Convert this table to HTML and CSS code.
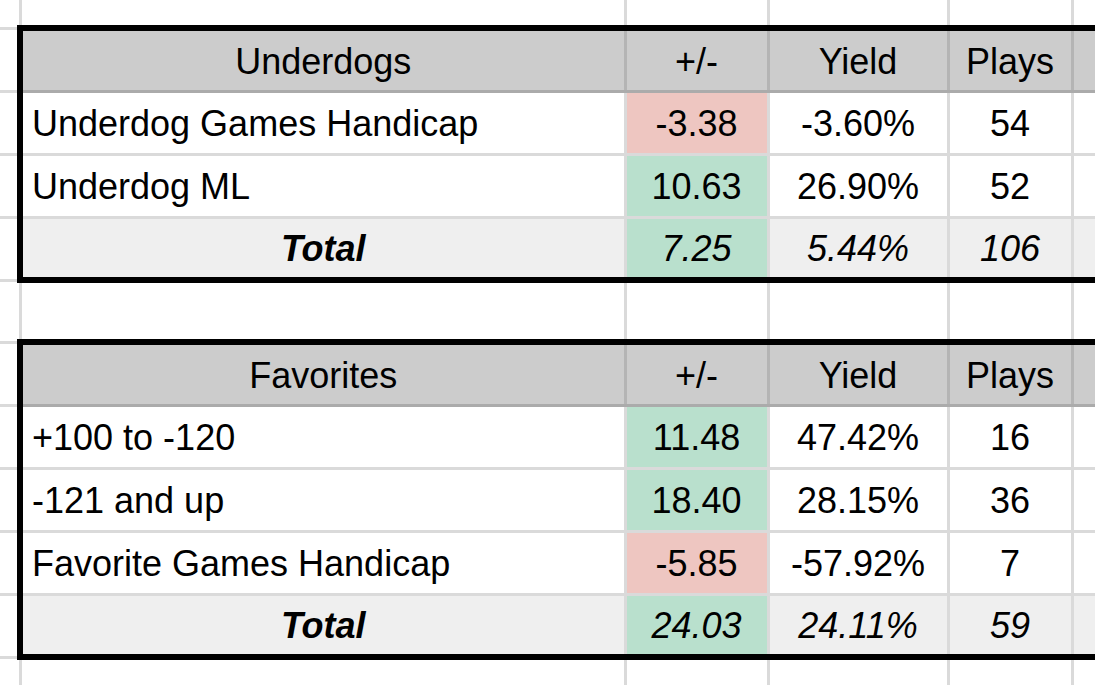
FILE: index.html
```html
<!DOCTYPE html>
<html>
<head>
<meta charset="utf-8">
<link rel="stylesheet" href="styles.css">
</head>
<body>
<table class="sheet">
  <colgroup>
    <col class="col-a"><col class="col-b"><col class="col-c"><col class="col-d"><col class="col-e"><col class="col-f">
  </colgroup>
  <tr class="r-top">
    <td class="ca"></td><td></td><td></td><td></td><td></td><td></td>
  </tr>
  <tr class="r-head">
    <td class="ca"></td><td class="th first">Underdogs</td><td class="th">+/-</td><td class="th">Yield</td><td class="th">Plays</td><td class="th"></td>
  </tr>
  <tr class="r-body">
    <td class="ca"></td><td class="label first">Underdog Games Handicap</td><td class="num neg">-3.38</td><td class="num">-3.60%</td><td class="num">54</td><td></td>
  </tr>
  <tr class="r-body">
    <td class="ca"></td><td class="label first">Underdog ML</td><td class="num pos">10.63</td><td class="num">26.90%</td><td class="num">52</td><td></td>
  </tr>
  <tr class="r-total">
    <td class="ca"></td><td class="tot first"><b>Total</b></td><td class="tot pos">7.25</td><td class="tot">5.44%</td><td class="tot">106</td><td class="tot"></td>
  </tr>
  <tr class="r-gap">
    <td class="ca"></td><td></td><td></td><td></td><td></td><td></td>
  </tr>
  <tr class="r-head">
    <td class="ca"></td><td class="th first">Favorites</td><td class="th">+/-</td><td class="th">Yield</td><td class="th">Plays</td><td class="th"></td>
  </tr>
  <tr class="r-body">
    <td class="ca"></td><td class="label first">+100 to -120</td><td class="num pos">11.48</td><td class="num">47.42%</td><td class="num">16</td><td></td>
  </tr>
  <tr class="r-body">
    <td class="ca"></td><td class="label first">-121 and up</td><td class="num pos">18.40</td><td class="num">28.15%</td><td class="num">36</td><td></td>
  </tr>
  <tr class="r-body">
    <td class="ca"></td><td class="label first">Favorite Games Handicap</td><td class="num neg">-5.85</td><td class="num">-57.92%</td><td class="num">7</td><td></td>
  </tr>
  <tr class="r-total">
    <td class="ca"></td><td class="tot first"><b>Total</b></td><td class="tot pos">24.03</td><td class="tot">24.11%</td><td class="tot">59</td><td class="tot"></td>
  </tr>
  <tr class="r-gap">
    <td class="ca"></td><td></td><td></td><td></td><td></td><td></td>
  </tr>
</table>
</body>
</html>
```

FILE: styles.css
```css
html, body {
  margin: 0;
  padding: 0;
  background: #ffffff;
  overflow: hidden;
}

.sheet {
  border-collapse: collapse;
  table-layout: fixed;
  width: 1192px;
  font-family: "Liberation Sans", Arial, sans-serif;
  font-size: 36px;
  color: #000;
}

.col-a { width: 20px; }
.col-b { width: 605px; }
.col-c { width: 143px; }
.col-d { width: 180px; }
.col-e { width: 124px; }
.col-f { width: 120px; }

.sheet td {
  border: 3px solid #dadada;
  padding: 3px 0 0 0;
  vertical-align: middle;
  text-align: center;
  white-space: nowrap;
  overflow: hidden;
}

.sheet td.ca {
  border-left: none;
}

.sheet .r-top td { border-top: none; }
.sheet .r-top td.ca { border-bottom: none; }

.r-top { height: 28px; }
.r-head { height: 63px; }
.r-body { height: 63px; }
.r-total { height: 63px; }
.r-gap { height: 62px; }

.sheet td.th {
  background: #cccccc;
  border-top: 6px solid #000;
  border-left: 3px solid #b4b4b4;
  border-right: 3px solid #b4b4b4;
  border-bottom: 3px solid #ababab;
}

.sheet td.first {
  border-left: 6px solid #000;
}

.sheet td.label {
  text-align: left;
  padding-left: 9px;
}

.neg { background: #eec6c1; }
.pos { background: #b9e0cd; }

.sheet td.tot {
  background: #efefef;
  font-style: italic;
  border-bottom: 6px solid #000;
}

.sheet td.tot.pos { background: #b9e0cd; }

.tot b {
  font-weight: bold;
  font-style: italic;
}
```
